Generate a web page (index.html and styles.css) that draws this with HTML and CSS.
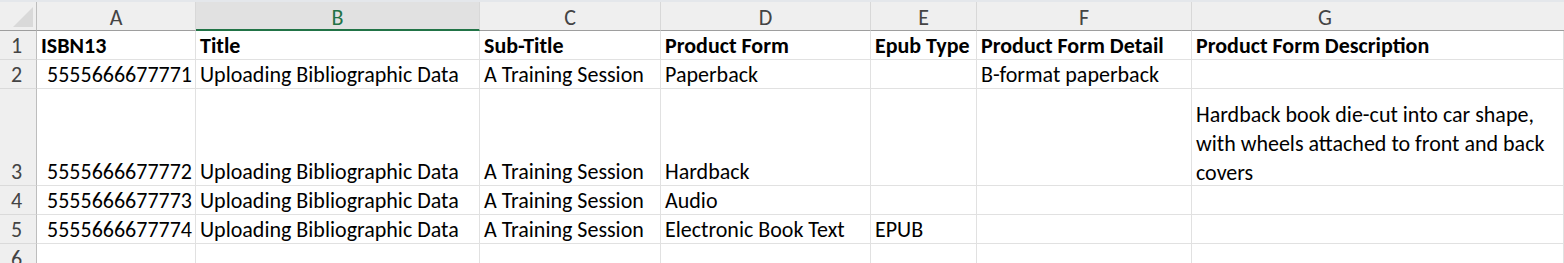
FILE: index.html
```html
<!DOCTYPE html>
<html lang="en">
<head>
    <meta charset="UTF-8">
    <title>Sheet1</title>
    <link rel="stylesheet" href="styles.css">
</head>
<body>
    <div class="sheet">
        <div class="hd corner"><span class="tri"></span></div>
        <div class="hd col">A</div>
        <div class="hd col sel">B</div>
        <div class="hd col">C</div>
        <div class="hd col">D</div>
        <div class="hd col">E</div>
        <div class="hd col">F</div>
        <div class="hd col colg">G</div>

        <div class="hd rn">1</div>
        <div class="c b">ISBN13</div>
        <div class="c b">Title</div>
        <div class="c b">Sub-Title</div>
        <div class="c b">Product Form</div>
        <div class="c b">Epub Type</div>
        <div class="c b">Product Form Detail</div>
        <div class="c b">Product Form Description</div>

        <div class="hd rn">2</div>
        <div class="c num">5555666677771</div>
        <div class="c">Uploading Bibliographic Data</div>
        <div class="c">A Training Session</div>
        <div class="c">Paperback</div>
        <div class="c"></div>
        <div class="c">B-format paperback</div>
        <div class="c"></div>

        <div class="hd rn">3</div>
        <div class="c num">5555666677772</div>
        <div class="c">Uploading Bibliographic Data</div>
        <div class="c">A Training Session</div>
        <div class="c">Hardback</div>
        <div class="c"></div>
        <div class="c"></div>
        <div class="c wrap"><p>Hardback book die-cut into car shape, with wheels attached to front and back covers</p></div>

        <div class="hd rn">4</div>
        <div class="c num">5555666677773</div>
        <div class="c">Uploading Bibliographic Data</div>
        <div class="c">A Training Session</div>
        <div class="c">Audio</div>
        <div class="c"></div>
        <div class="c"></div>
        <div class="c"></div>

        <div class="hd rn">5</div>
        <div class="c num">5555666677774</div>
        <div class="c">Uploading Bibliographic Data</div>
        <div class="c">A Training Session</div>
        <div class="c">Electronic Book Text</div>
        <div class="c">EPUB</div>
        <div class="c"></div>
        <div class="c"></div>

        <div class="hd rn">6</div>
        <div class="c"></div>
        <div class="c"></div>
        <div class="c"></div>
        <div class="c"></div>
        <div class="c"></div>
        <div class="c"></div>
        <div class="c"></div>
    </div>
</body>
</html>
```

FILE: styles.css
```css
*{
    margin:0;
    padding:0;
    box-sizing:border-box;
}
body{
    background:#fff;
    font-family:Carlito, Lato, "Noto Sans", sans-serif;
    font-size:22px;
    color:#000;
    overflow:hidden;
}
.sheet{
    display:grid;
    grid-template-columns:37px 159px 284px 181px 210px 106px 215px 1fr;
    grid-template-rows:29px 29px 29px 97px 29px 29px 29px;
    border-top:2px solid #e4e7eb;
    width:1564px;
}
.hd{
    background:#efefef;
    color:#444;
    border-right:1px solid #d8d8d8;
    border-bottom:1px solid #d8d8d8;
    line-height:22px;
}
.corner{
    position:relative;
    border-bottom:1px solid #9e9e9e;
    border-right:1px solid #bdbdbd;
}
.tri{
    position:absolute;
    right:3px;
    bottom:3px;
    width:0;
    height:0;
    border-left:20px solid transparent;
    border-bottom:20px solid #d9d9d9;
}
.col{
    display:flex;
    align-items:center;
    justify-content:center;
    border-bottom:1px solid #9e9e9e;
    padding-top:4px;
}
.colg{
    padding-right:106px;
    border-right:none;
}
.sel{
    background:#e1e1e1;
    color:#217346;
    border-bottom:2px solid #217346;
    padding-top:5px;
}
.rn{
    display:flex;
    align-items:flex-end;
    justify-content:center;
    padding:0 3px 2px 0;
    border-right:1px solid #bdbdbd;
    border-bottom:1px solid #dadada;
}
.c{
    display:flex;
    align-items:flex-end;
    padding:0 4px 2px 4px;
    border-right:1px solid #e1e1e1;
    border-bottom:1px solid #e1e1e1;
    white-space:nowrap;
    line-height:22px;
}
.b{
    font-weight:bold;
}
.num{
    justify-content:flex-end;
    padding-right:3px;
}
.wrap{
    white-space:normal;
    line-height:29px;
    padding-bottom:0;
}
.wrap p{
    width:362px;
    margin-bottom:-2px;
}
```
